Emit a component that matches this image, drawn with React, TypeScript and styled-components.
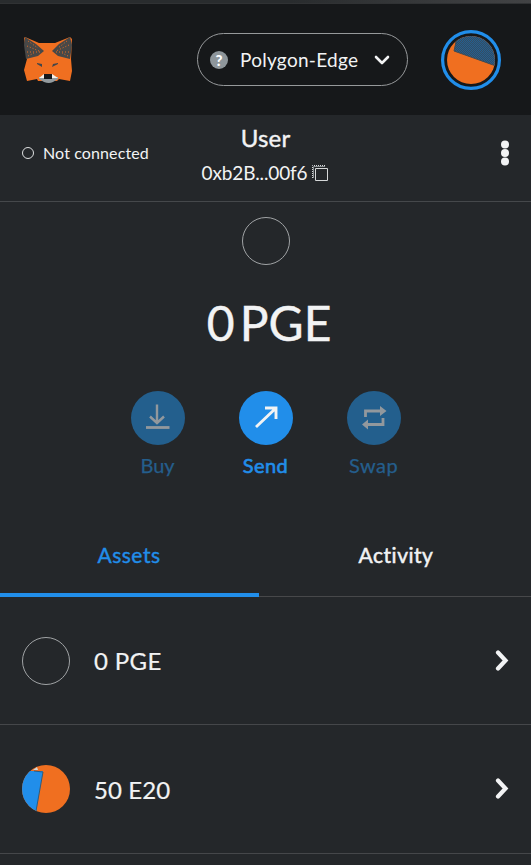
import React from 'react';
import styled, { createGlobalStyle } from 'styled-components';

const GlobalStyle = createGlobalStyle`
  * { box-sizing: border-box; }
  body { margin: 0; background: #24272a; }
  button { font: inherit; color: inherit; background: none; border: 0; padding: 0; }
`;

const Wallet = styled.main`
  width: 531px;
  height: 865px;
  overflow: hidden;
  background: #24272a;
  color: #f2f3f4;
  font-family: Lato, "Open Sans", sans-serif;
`;

const WindowEdge = styled.div`
  height: 4px;
  background: linear-gradient(90deg, #292c2e 0 55%, #424345 100%);
  border-bottom: 1px solid #303234;
`;

const Header = styled.header`
  height: 111px;
  display: flex;
  align-items: center;
  padding: 0 30px 0 22px;
  background: #16181a;
`;

const NetworkButton = styled.button`
  width: 211px;
  height: 53px;
  margin-left: auto;
  margin-right: 33px;
  padding: 0 17px 0 12px;
  display: flex;
  align-items: center;
  border: 1px solid #96999b;
  border-radius: 27px;
`;

const Label = styled.span<{ $size: number; $stroke?: number; $spacing?: number }>`
  font-size: ${p => p.$size}px;
  -webkit-text-stroke: ${p => p.$stroke ?? 0}px currentColor;
  letter-spacing: ${p => p.$spacing ?? 0}px;
  line-height: 1.2;
  white-space: pre;
`;

const NetworkName = styled(Label)`
  margin-left: 12px;
  padding-top: 1px;
  flex: 1;
  text-align: left;
`;

const Question = styled.span`
  width: 18px;
  height: 18px;
  border-radius: 50%;
  background: #8e969b;
  color: #fff;
  font: 900 15px/18px Lato, sans-serif;
  text-align: center;
`;

const AccountBar = styled.section`
  height: 87px;
  display: grid;
  grid-template-columns: 180px 171px 180px;
  border-bottom: 1px solid #45484b;
`;

const Connection = styled.div`
  display: flex;
  align-items: center;
  gap: 9px;
  padding: 0 0 10px 22px;
`;

const ConnectionDot = styled.span`
  width: 12px;
  height: 12px;
  border: 1px solid #dfe1e2;
  border-radius: 50%;
`;

const Account = styled.div`
  display: flex;
  flex-direction: column;
  align-items: center;
  padding-top: 9px;
`;

const Address = styled.div`
  display: flex;
  align-items: center;
  gap: 5px;
  margin-top: 9px;
`;

const MenuButton = styled.button`
  display: flex;
  justify-content: flex-end;
  padding: 25px 21px 0 0;
`;

const Overview = styled.section`
  height: 313px;
  padding-top: 15px;
  display: flex;
  flex-direction: column;
  align-items: center;
`;

const Token = styled.span`
  width: 48px;
  height: 48px;
  flex: none;
  border: 1px solid #a0a3a5;
  border-radius: 50%;
`;

const Balance = styled.div`
  height: 58px;
  margin-top: 29px;
  padding-left: 7px;
  display: flex;
  align-items: center;
  word-spacing: -7px;
`;

const Actions = styled.div`
  display: flex;
  gap: 54px;
  margin-top: 39px;
`;

const Action = styled.button<{ $muted?: boolean }>`
  width: 54px;
  display: flex;
  flex-direction: column;
  align-items: center;
  gap: 8px;
  color: ${p => p.$muted ? '#245e8c' : '#218eea'};
`;

const ActionCircle = styled.span<{ $muted?: boolean }>`
  width: 54px;
  height: 54px;
  border-radius: 50%;
  display: grid;
  place-items: center;
  background: ${p => p.$muted ? '#235f8d' : '#218eea'};
  color: ${p => p.$muted ? '#92989d' : '#f2f3f4'};
`;

const Tabs = styled.nav`
  display: grid;
  grid-template-columns: 259px 272px;
  height: 82px;
`;

const Tab = styled.button<{ $active?: boolean }>`
  display: flex;
  justify-content: center;
  padding-top: 27px;
  padding-right: ${p => p.$active ? 1 : 0}px;
  padding-left: ${p => p.$active ? 0 : 2}px;
  color: ${p => p.$active ? '#218eea' : '#f2f3f4'};
  border-bottom: ${p => p.$active ? '4px solid #218eea' : '1px solid #47484a'};
`;

const AssetRow = styled.button<{ $height: number }>`
  width: 100%;
  height: ${p => p.$height}px;
  display: grid;
  grid-template-columns: 48px 1fr 14px;
  column-gap: 24px;
  align-items: center;
  padding: 0 22px;
  text-align: left;
  border-bottom: 1px solid #45474a;
`;

const AssetName = styled(Label)`
  padding-top: 2px;
`;

function Fox() {
  return (
    <svg width="52" height="48" viewBox="0 0 52 48" aria-label="MetaMask">
      <path d="M3 1 17 7h16L48 1l2 2-1 20 1 12-2 10-11-2-2 2H16l-1-2L5 45 2 34l3-11L2 2Z" fill="#f06f20" />
      <path d="M3 1 2 9l2 14 12-3 6-5L14 8Z" fill="#484847" />
      <path d="m48 1 2 8-2 14-12-3-6-5 7-7Z" fill="#484847" />
      <path d="m6 5 10 7M5 10l12 5M5 16h14M6 20l6-3M45 5l-9 7m11-3-13 6m13 1H34m12 4-6-3" stroke="#e46c23" strokeDasharray="1 2" />
      <path d="m15 27 5 1v3l-5-3m21-1-5 1-1 3 6-3" fill="#41464b" />
      <path d="M17 41h19v2l-5 3q-4 2-9 0l-5-3Z" fill="#939b9f" />
      <path d="m17 42 5-4v4m8-4 6 4h-6" fill="#f5f1e9" />
      <path d="M22 38h8v5h-8Z" fill="#15181b" />
    </svg>
  );
}

function Avatar() {
  return (
    <svg width="60" height="60" viewBox="0 0 60 60" aria-label="Account">
      <defs>
        <clipPath id="account-circle"><circle cx="30" cy="30" r="24" /></clipPath>
        <pattern id="account-grain" width="2" height="2" patternUnits="userSpaceOnUse">
          <rect width="2" height="2" fill="#245f91" />
          <path d="M0 .5h1M1 1.5h1" stroke="#344d62" />
        </pattern>
      </defs>
      <circle cx="30" cy="30" r="28.4" fill="none" stroke="#218eea" strokeWidth="3.2" />
      <g clipPath="url(#account-circle)">
        <path d="M6 6h48v48H6Z" fill="#f06f20" />
        <path d="m17 0-4 21 42 15V5Z" fill="url(#account-grain)" />
        <path d="m15 12-2 9 42 15" fill="none" stroke="#454c51" />
      </g>
    </svg>
  );
}

function Chevron({ down = false }: { down?: boolean }) {
  return down ? (
    <svg width="16" height="10" viewBox="0 0 16 10" fill="none">
      <path d="m2 2 6 6 6-6" stroke="currentColor" strokeWidth="2.6" strokeLinecap="round" strokeLinejoin="round" />
    </svg>
  ) : (
    <svg width="14" height="22" viewBox="0 0 14 22" fill="none">
      <path d="m3 2.5 7.5 8-7.5 8" stroke="currentColor" strokeWidth="4.2" strokeLinecap="round" strokeLinejoin="miter" />
    </svg>
  );
}

function CopyIcon() {
  return (
    <svg width="17" height="17" viewBox="0 0 17 17" fill="none" stroke="#d6d8d9">
      <path d="M13 .5H.5V13" strokeDasharray="1 1" />
      <path d="M1.5 13V1.5H13" stroke="#8b9093" />
      <path d="M3.5 3.5h12v12h-12Z" />
    </svg>
  );
}

function ActionIcon({ kind }: { kind: 'buy' | 'send' | 'swap' }) {
  return (
    <svg width="30" height="30" viewBox="0 0 30 30" fill="none" stroke="currentColor">
      {kind === 'buy' && <>
        <path d="M14 1.5V20M7 13.5l7 6.5 7-6.5" strokeWidth="2.4" />
        <path d="M3 24.5h23.5" strokeWidth="2.8" />
      </>}
      {kind === 'send' && <path d="M5 24 24.5 5.5M14 5h11v11" strokeWidth="2.9" />}
      {kind === 'swap' && <>
        <path d="M6.5 14V8h17M24 15v6.5H7" strokeWidth="2.8" />
        <path d="m21 3 6.5 5-6.5 5ZM9 16.5l-6 5 6 5Z" fill="currentColor" stroke="none" />
      </>}
    </svg>
  );
}

function TokenIcon() {
  return (
    <svg width="48" height="48" viewBox="0 0 48 48">
      <defs><clipPath id="token-circle"><circle cx="24" cy="24" r="24" /></clipPath></defs>
      <g clipPath="url(#token-circle)">
        <path d="M0 0h48v48H0Z" fill="#f06f20" />
        <path d="M0 6h21l-7 42H0Z" fill="#218eea" />
        <path d="m12 6 9 1-7 39" stroke="#315c7b" fill="none" />
        <path d="m11 5 4-3 1 3Z" fill="#d1d7d8" />
      </g>
    </svg>
  );
}

export default function App() {
  return (
    <>
      <GlobalStyle />
      <Wallet>
        <WindowEdge />
        <Header>
          <Fox />
          <NetworkButton>
            <Question>?</Question>
            <NetworkName $size={19} $spacing={0.28}>Polygon-Edge</NetworkName>
            <Chevron down />
          </NetworkButton>
          <Avatar />
        </Header>
        <AccountBar>
          <Connection>
            <ConnectionDot />
            <Label $size={16} $spacing={0.12}>Not connected</Label>
          </Connection>
          <Account>
            <Label $size={24} $stroke={0.4} $spacing={0.2}>User</Label>
            <Address>
              <Label $size={19} $spacing={-0.15}>0xb2B...00f6</Label>
              <CopyIcon />
            </Address>
          </Account>
          <MenuButton aria-label="Account options">
            <svg width="10" height="26" viewBox="0 0 10 26" fill="#f2f3f4">
              <circle cx="5" cy="4.5" r="4" />
              <circle cx="5" cy="13" r="4" />
              <circle cx="5" cy="21.5" r="4" />
            </svg>
          </MenuButton>
        </AccountBar>
        <Overview>
          <Token />
          <Balance><Label $size={48} $stroke={0.4}>0 PGE</Label></Balance>
          <Actions>
            <Action $muted><ActionCircle $muted><ActionIcon kind="buy" /></ActionCircle><Label $size={20} $stroke={0.25}>Buy</Label></Action>
            <Action><ActionCircle><ActionIcon kind="send" /></ActionCircle><Label $size={20} $stroke={0.6} $spacing={0.4}>Send</Label></Action>
            <Action $muted><ActionCircle $muted><ActionIcon kind="swap" /></ActionCircle><Label $size={20} $stroke={0.25} $spacing={0.5}>Swap</Label></Action>
          </Actions>
        </Overview>
        <Tabs>
          <Tab $active><Label $size={21} $stroke={0.4} $spacing={0.5}>Assets</Label></Tab>
          <Tab><Label $size={21} $stroke={0.5} $spacing={0.5}>Activity</Label></Tab>
        </Tabs>
        <AssetRow $height={128}><Token /><AssetName $size={24} $stroke={0.2} $spacing={0.35}>0 PGE</AssetName><Chevron /></AssetRow>
        <AssetRow $height={129}><TokenIcon /><AssetName $size={24} $stroke={0.2} $spacing={0.1}>50 E20</AssetName><Chevron /></AssetRow>
      </Wallet>
    </>
  );
}
